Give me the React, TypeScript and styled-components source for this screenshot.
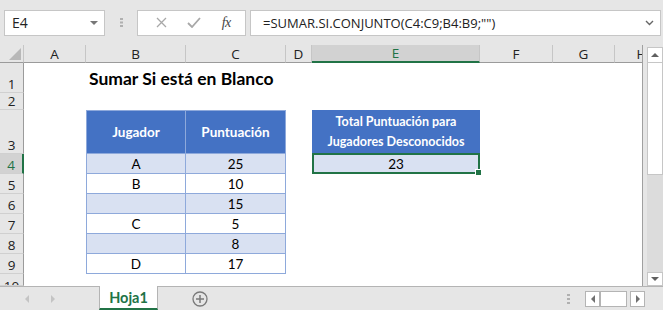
import React from 'react'
import styled, { createGlobalStyle, css } from 'styled-components'

const GlobalStyle = createGlobalStyle`
  html, body {
    margin: 0;
    padding: 0;
    background: #ffffff;
  }
`

const UI_FONT = `'Open Sans', 'Liberation Sans', sans-serif`
const CELL_FONT = `Lato, 'Liberation Sans', sans-serif`
const GREEN = '#217346'
const TABLE_BORDER = '#8ea9db'

const Window = styled.div`
  width: 663px;
  height: 310px;
  background: #e6e6e6;
  display: flex;
  flex-direction: column;
  overflow: hidden;
  font-family: ${UI_FONT};
`

const FormulaBar = styled.div`
  height: 45px;
  display: flex;
  align-items: center;
  padding: 0 2px 0 4px;
  box-sizing: border-box;
`

const NameBox = styled.div`
  width: 101px;
  height: 26px;
  box-sizing: border-box;
  background: #fff;
  border: 1px solid #c6c6c6;
  display: flex;
  align-items: center;
  justify-content: space-between;
  padding: 0 6px 0 7px;
  font-size: 14px;
  color: #222;
`

const Grip = styled.div`
  width: 32px;
  display: flex;
  justify-content: center;
`

const FxBox = styled.div`
  width: 109px;
  height: 26px;
  box-sizing: border-box;
  background: #fff;
  border: 1px solid #c6c6c6;
  display: flex;
  align-items: center;
  justify-content: space-around;
  padding: 0 4px 0 8px;
  margin-right: 4px;
`

const FxLabel = styled.span`
  font-family: 'Liberation Serif', serif;
  font-style: italic;
  font-size: 14px;
  color: #444;
  letter-spacing: -0.5px;
`

const FormulaInput = styled.div`
  flex: 1;
  height: 26px;
  box-sizing: border-box;
  background: #fff;
  border: 1px solid #c6c6c6;
  display: flex;
  align-items: center;
  justify-content: space-between;
  padding: 0 6px 0 12px;
  font-size: 13px;
  color: #222;
  white-space: nowrap;
`

const SheetArea = styled.div`
  display: flex;
  height: 241px;
`

const Grid = styled.div`
  width: 643px;
  display: grid;
  grid-template-columns: 24px 62px 100px 100px 26px 168px 73px 62px 54px;
  grid-template-rows: 18px 30px 17px 44px 20px 20px 20px 20px 20px 20px 12px;
  background: #fff;
  border-right: 1px solid #a0a0a0;
  box-sizing: border-box;
  overflow: hidden;
  position: relative;
`

const ColHead = styled.div<{ $active?: boolean }>`
  background: ${(p) => (p.$active ? '#d2d2d2' : '#e6e6e6')};
  border-right: 1px solid #c6c6c6;
  border-bottom: ${(p) => (p.$active ? `2px solid ${GREEN}` : '1px solid #9b9b9b')};
  box-sizing: border-box;
  display: flex;
  align-items: center;
  justify-content: center;
  font-size: 13.5px;
  color: ${(p) => (p.$active ? GREEN : '#222')};
  white-space: nowrap;
  overflow: hidden;
`

const Corner = styled.div`
  background: #e6e6e6;
  border-right: 1px solid #c6c6c6;
  border-bottom: 1px solid #9b9b9b;
  box-sizing: border-box;
  display: flex;
  align-items: flex-end;
  justify-content: flex-end;
  padding: 0 2px 2px 0;
`

const RowHead = styled.div<{ $active?: boolean; $top?: boolean }>`
  background: ${(p) => (p.$active ? '#d2d2d2' : '#e6e6e6')};
  border-bottom: 1px solid #d0d0d0;
  border-right: ${(p) => (p.$active ? `2px solid ${GREEN}` : '1px solid #9b9b9b')};
  box-sizing: border-box;
  display: flex;
  align-items: ${(p) => (p.$top ? 'flex-start' : 'flex-end')};
  justify-content: center;
  padding-top: ${(p) => (p.$top ? '4px' : '0')};
  font-size: 13.5px;
  line-height: 16px;
  color: ${(p) => (p.$active ? GREEN : '#222')};
  overflow: hidden;
`

const Title = styled.div`
  grid-column: 3 / span 2;
  display: flex;
  align-items: flex-end;
  padding: 0 0 4px 3px;
  font-family: ${CELL_FONT};
  font-weight: 700;
  font-size: 17.5px;
  color: #000;
  white-space: nowrap;
`

type CellProps = {
  $fill?: string
  $header?: boolean
  $left?: boolean
  $top?: boolean
  $boxed?: boolean
}

const Cell = styled.div<CellProps>`
  box-sizing: border-box;
  background: ${(p) => p.$fill || '#fff'};
  display: flex;
  align-items: center;
  justify-content: center;
  text-align: center;
  font-family: ${CELL_FONT};
  font-size: 13.5px;
  line-height: 20px;
  color: ${(p) => (p.$header ? '#fff' : '#000')};
  font-weight: ${(p) => (p.$header ? 700 : 400)};
  ${(p) =>
    p.$boxed &&
    css`
      border-right: 1px solid ${TABLE_BORDER};
      border-bottom: 1px solid ${TABLE_BORDER};
    `}
  ${(p) => p.$left && css`border-left: 1px solid ${TABLE_BORDER};`}
  ${(p) => p.$top && css`border-top: 1px solid ${TABLE_BORDER};`}
`

const WideHeader = styled(Cell)`
  font-size: 12.5px;
`

const Selected = styled(Cell)`
  position: relative;
  border: 2px solid ${GREEN};
  margin: -1px 0 0 0;
  padding-top: 1px;
`

const Handle = styled.span`
  position: absolute;
  right: -4px;
  bottom: -4px;
  width: 5px;
  height: 5px;
  background: ${GREEN};
  border: 1px solid #fff;
`

const Empty = styled.div``

const VScroll = styled.div`
  width: 20px;
  display: flex;
  flex-direction: column;
  padding: 2px 0 0 4px;
  box-sizing: border-box;
`

const ScrollButton = styled.div<{ $h: number }>`
  height: ${(p) => p.$h}px;
  background: #fff;
  border: 1px solid #c6c6c6;
  box-sizing: border-box;
  display: flex;
  align-items: center;
  justify-content: center;
`

const Thumb = styled.div`
  height: 112px;
  background: #fff;
  border: 1px solid #c6c6c6;
  border-top: none;
  box-sizing: border-box;
`

const Track = styled.div`
  flex: 1;
  background: #dcdcdc;
`

const TabBar = styled.div`
  height: 24px;
  border-top: 1px solid #b4b4b4;
  box-sizing: border-box;
  display: flex;
  align-items: stretch;
`

const TabNav = styled.div`
  width: 99px;
  display: flex;
  align-items: center;
  justify-content: flex-start;
  gap: 22px;
  padding-left: 25px;
  box-sizing: border-box;
`

const SheetTab = styled.div`
  width: 59px;
  margin-top: -1px;
  background: #fff;
  border-left: 1px solid #b4b4b4;
  border-right: 1px solid #b4b4b4;
  border-bottom: 2px solid ${GREEN};
  box-sizing: border-box;
  display: flex;
  align-items: center;
  justify-content: center;
  font-family: ${CELL_FONT};
  font-weight: 700;
  font-size: 14.5px;
  color: ${GREEN};
`

const AddSheet = styled.div`
  width: 84px;
  display: flex;
  align-items: center;
  justify-content: center;
`

const HScroll = styled.div`
  flex: 1;
  display: flex;
  align-items: center;
  justify-content: flex-end;
  padding-right: 18px;
`

const HButton = styled.div<{ $w: number; $gap?: number }>`
  width: ${(p) => p.$w}px;
  height: 16px;
  margin-left: ${(p) => p.$gap ?? 0}px;
  background: #fff;
  border: 1px solid #b4b4b4;
  box-sizing: border-box;
  display: flex;
  align-items: center;
  justify-content: center;
`

const Dots = ({ h = 10 }: { h?: number }) => (
  <svg width="3" height={h} viewBox={`0 0 3 ${h}`}>
    <rect x="0" y="0" width="3" height="2" fill="#b0b0b0" />
    <rect x="0" y={h / 2 - 1} width="3" height="2" fill="#b0b0b0" />
    <rect x="0" y={h - 2} width="3" height="2" fill="#b0b0b0" />
  </svg>
)

const Tri = ({ dir, color = '#707070', size = 4 }: { dir: 'up' | 'down' | 'left' | 'right'; color?: string; size?: number }) => {
  const s = size
  const pts = {
    up: `0,${s} ${s},0 ${2 * s},${s}`,
    down: `0,0 ${2 * s},0 ${s},${s}`,
    left: `${s},0 ${s},${2 * s} 0,${s}`,
    right: `0,0 0,${2 * s} ${s},${s}`,
  }[dir]
  const vertical = dir === 'up' || dir === 'down'
  return (
    <svg width={vertical ? 2 * s : s} height={vertical ? s : 2 * s}>
      <polygon points={pts} fill={color} />
    </svg>
  )
}

const cols = ['A', 'B', 'C', 'D', 'E', 'F', 'G', 'H']

const data: [string, string][] = [
  ['A', '25'],
  ['B', '10'],
  ['', '15'],
  ['C', '5'],
  ['', '8'],
  ['D', '17'],
]

const App: React.FC = () => {
  return (
    <>
      <GlobalStyle />
      <Window>
        <FormulaBar>
          <NameBox>
            <span>E4</span>
            <Tri dir="down" color="#777" size={4} />
          </NameBox>
          <Grip>
            <Dots h={9} />
          </Grip>
          <FxBox>
            <svg width="11" height="11" viewBox="0 0 11 11">
              <path d="M1 1 L10 10 M10 1 L1 10" stroke="#a8a8a8" strokeWidth="1.3" />
            </svg>
            <svg width="14" height="11" viewBox="0 0 14 11">
              <path d="M1 6 L5 10 L13 1" stroke="#a8a8a8" strokeWidth="1.8" fill="none" />
            </svg>
            <FxLabel>fx</FxLabel>
          </FxBox>
          <FormulaInput>
            <span>=SUMAR.SI.CONJUNTO(C4:C9;B4:B9;"")</span>
            <svg width="9" height="6" viewBox="0 0 9 6">
              <path d="M1 1 L4.5 4.5 L8 1" stroke="#666" strokeWidth="1.4" fill="none" />
            </svg>
          </FormulaInput>
        </FormulaBar>

        <SheetArea>
          <Grid>
            <Corner>
              <svg width="12" height="12" viewBox="0 0 12 12">
                <polygon points="12,0 12,12 0,12" fill="#b8b8b8" />
              </svg>
            </Corner>
            {cols.map((c) => (
              <ColHead key={c} $active={c === 'E'}>
                {c}
              </ColHead>
            ))}

            {/* row 1 */}
            <RowHead>1</RowHead>
            <Empty />
            <Title>Sumar Si está en Blanco</Title>
            <Empty />
            <Empty />
            <Empty />
            <Empty />
            <Empty />

            {/* row 2 */}
            <RowHead>2</RowHead>
            {cols.map((c) => (
              <Empty key={c} />
            ))}

            {/* row 3 */}
            <RowHead>3</RowHead>
            <Empty />
            <Cell $fill="#4472c4" $header $boxed $left $top>
              Jugador
            </Cell>
            <Cell $fill="#4472c4" $header $boxed $top>
              Puntuación
            </Cell>
            <Empty />
            <WideHeader $fill="#4472c4" $header>
              Total Puntuación para
              <br />
              Jugadores Desconocidos
            </WideHeader>
            <Empty />
            <Empty />
            <Empty />

            {data.map(([j, p], i) => {
              const fill = i % 2 === 0 ? '#d9e1f2' : '#ffffff'
              return (
                <React.Fragment key={i}>
                  <RowHead $active={i === 0}>{i + 4}</RowHead>
                  <Empty />
                  <Cell $fill={fill} $boxed $left>
                    {j}
                  </Cell>
                  <Cell $fill={fill} $boxed>
                    {p}
                  </Cell>
                  <Empty />
                  {i === 0 ? (
                    <Selected $fill="#d9e1f2">
                      23
                      <Handle />
                    </Selected>
                  ) : (
                    <Empty />
                  )}
                  <Empty />
                  <Empty />
                  <Empty />
                </React.Fragment>
              )
            })}

            <RowHead $top>10</RowHead>
          </Grid>
          <VScroll>
            <ScrollButton $h={16}>
              <Tri dir="up" color="#606060" size={4} />
            </ScrollButton>
            <Thumb />
            <Track />
            <ScrollButton $h={14}>
              <Tri dir="down" color="#606060" size={4} />
            </ScrollButton>
          </VScroll>
        </SheetArea>

        <TabBar>
          <TabNav>
            <Tri dir="left" color="#c4c4c4" size={4} />
            <Tri dir="right" color="#c4c4c4" size={4} />
          </TabNav>
          <SheetTab>Hoja1</SheetTab>
          <AddSheet>
            <svg width="16" height="16" viewBox="0 0 16 16">
              <circle cx="8" cy="8" r="7" fill="none" stroke="#7a7a7a" strokeWidth="1.3" />
              <path d="M8 4 V12 M4 8 H12" stroke="#7a7a7a" strokeWidth="1.5" />
            </svg>
          </AddSheet>
          <HScroll>
            <Dots h={10} />
            <HButton $w={15} $gap={15}>
              <Tri dir="left" color="#707070" size={4} />
            </HButton>
            <HButton $w={27} />
            <HButton $w={15} $gap={3}>
              <Tri dir="right" color="#707070" size={4} />
            </HButton>
          </HScroll>
        </TabBar>
      </Window>
    </>
  )
}

export default App
